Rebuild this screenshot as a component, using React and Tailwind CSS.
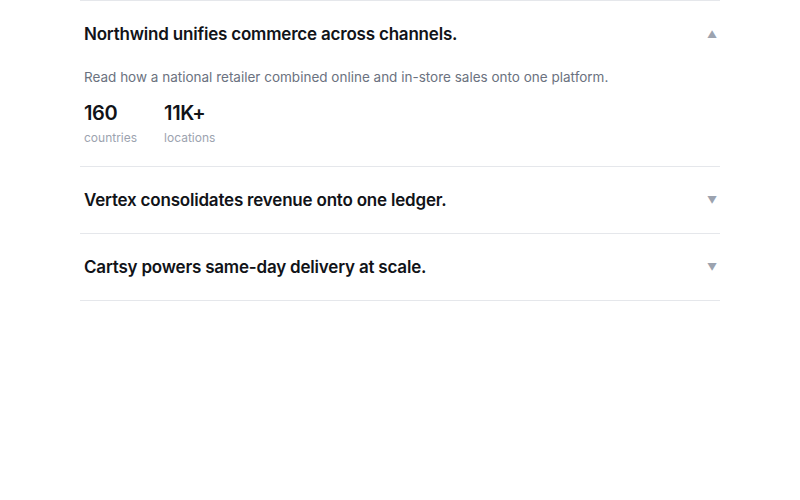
import React, { useState } from 'react';

const stories = [
  {
    id: 'northwind',
    title: 'Northwind unifies commerce across channels.',
    body: 'Read how a national retailer combined online and in-store sales onto one platform.',
    stats: [
      { value: '160', label: 'countries' },
      { value: '11K+', label: 'locations' },
    ],
  },
  {
    id: 'vertex',
    title: 'Vertex consolidates revenue onto one ledger.',
    body: 'See how a software company brought billing and reporting together.',
    stats: [],
  },
  {
    id: 'cartsy',
    title: 'Cartsy powers same-day delivery at scale.',
    body: 'Learn how a marketplace speeds up fulfilment across cities.',
    stats: [],
  },
];

const App = () => {
  const [open, setOpen] = useState('northwind');

  return (
    <div className="min-h-[500px] bg-white font-['Inter',sans-serif] text-[#111318]">
      <div className="mx-auto w-[640px]">
        {stories.map((story, i) => {
          const isOpen = open === story.id;
          return (
            <div
              key={story.id}
              className={`border-b border-[#e5e7eb] ${i === 0 ? 'border-t' : ''}`}
            >
              <button
                className="flex w-full items-center justify-between px-1 py-[21px] text-left"
                onClick={() => setOpen(isOpen ? null : story.id)}
              >
                <span className="text-[17px] leading-6 font-semibold tracking-[-0.2px]">
                  {story.title}
                </span>
                <span className="-mr-px text-[10px] leading-none text-[#9ca3af]">
                  {isOpen ? '▲' : '▼'}
                </span>
              </button>
              {isOpen && (
                <div className="px-1 pb-5">
                  <p className="text-[13.5px] leading-5 text-[#6b7280]">{story.body}</p>
                  <div className="mt-3 flex gap-[27px]">
                    {story.stats.map((s) => (
                      <div key={s.label}>
                        <div className="text-xl leading-7 font-semibold tracking-[-0.4px]">{s.value}</div>
                        <div className="mt-[3px] text-xs leading-4 text-[#9ca3af]">{s.label}</div>
                      </div>
                    ))}
                  </div>
                </div>
              )}
            </div>
          );
        })}
      </div>
    </div>
  );
};

export default App;
